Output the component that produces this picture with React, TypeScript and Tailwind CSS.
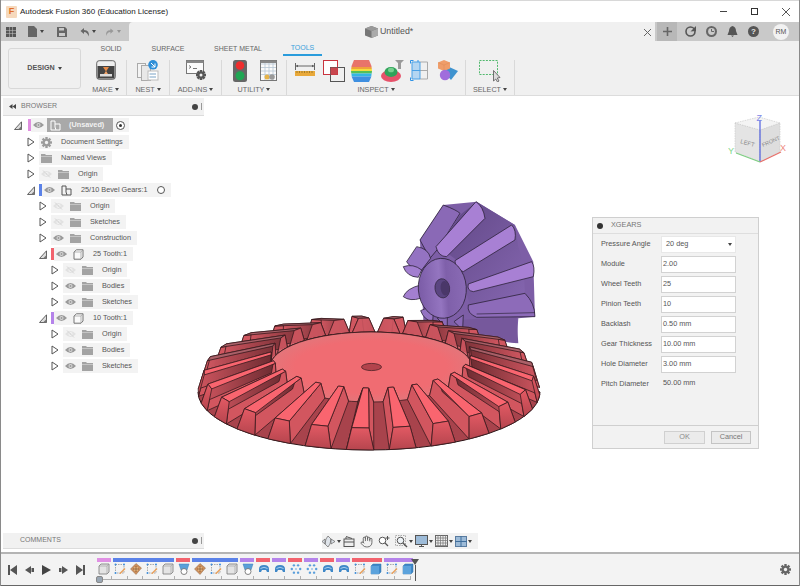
import React from 'react';
import { Hand } from 'lucide-react';

// ---------- small icons ----------
function Caret({ className = '' }: { className?: string }) {
  return <span className={`inline-block w-0 h-0 border-l-[2.5px] border-r-[2.5px] border-t-[3px] border-l-transparent border-r-transparent border-t-[#444] ${className}`} />;
}

function Eye({ off }: { off?: boolean }) {
  const c = off ? '#e2e2e2' : '#9a9a9a';
  return (
    <svg width="11" height="8" viewBox="0 0 11 8" className="shrink-0">
      <path d="M0 4 Q5.5 -2 11 4 Q5.5 10 0 4Z" fill={c} />
      <circle cx="5.5" cy="4" r="2" fill={off ? '#f3f3f3' : '#d8d8d8'} />
      <circle cx="5.5" cy="4" r="1" fill={c} />
      {off && <path d="M2 0.5 L9 7.5" stroke="#d4d4d4" strokeWidth="1" />}
    </svg>
  );
}

function Folder() {
  return (
    <svg width="11" height="9" viewBox="0 0 11 9" className="shrink-0">
      <path d="M0 0 H4 L5 1 H11 V9 H0Z" fill="#a3a3a3" />
      <rect x="0" y="2" width="11" height="1" fill="#c4c4c4" />
    </svg>
  );
}

function GearIcon({ size = 11, color = '#9c9c9c' }: { size?: number; color?: string }) {
  const teeth = [0, 45, 90, 135];
  return (
    <svg width={size} height={size} viewBox="0 0 12 12" className="shrink-0">
      {teeth.map((a) => (
        <rect key={a} x="4.7" y="0" width="2.6" height="12" fill={color} transform={`rotate(${a} 6 6)`} />
      ))}
      <circle cx="6" cy="6" r="4.2" fill={color} />
      <circle cx="6" cy="6" r="1.8" fill="#f3f3f3" />
    </svg>
  );
}

function CompIcon({ light }: { light?: boolean }) {
  const s = light ? '#fff' : '#555';
  return (
    <svg width="11" height="11" viewBox="0 0 11 11" className="shrink-0">
      <path d="M1 1 H5 V4 H10 V10 H1Z" fill="none" stroke={s} strokeWidth="1" />
      <path d="M5 4 V7 M5 7 Q6 10 6 10" fill="none" stroke={s} strokeWidth="1" />
    </svg>
  );
}

function BodyIcon() {
  return (
    <svg width="11" height="11" viewBox="0 0 11 11" className="shrink-0">
      <path d="M1 3 L3.5 0.8 H10 V8 L8 10.2 H1Z" fill="#fafafa" stroke="#666" strokeWidth="0.9" />
      <path d="M1 3 H8 V10 M8 3 L10 0.8" fill="none" stroke="#999" strokeWidth="0.7" />
    </svg>
  );
}

// ---------- browser tree ----------
type Row = { level: number; open?: boolean; bar?: string; eye?: 'on' | 'off'; icon: 'folder' | 'gear' | 'comp' | 'body'; label: string; radio?: boolean };

const rows: Row[] = [
  { level: 1, icon: 'gear', label: 'Document Settings' },
  { level: 1, icon: 'folder', label: 'Named Views' },
  { level: 1, eye: 'off', icon: 'folder', label: 'Origin' },
  { level: 1, open: true, bar: 'bg-[#5b82e8]', eye: 'on', icon: 'comp', label: '25/10 Bevel Gears:1', radio: true },
  { level: 2, eye: 'off', icon: 'folder', label: 'Origin' },
  { level: 2, eye: 'off', icon: 'folder', label: 'Sketches' },
  { level: 2, eye: 'on', icon: 'folder', label: 'Construction' },
  { level: 2, open: true, bar: 'bg-[#f2636e]', eye: 'on', icon: 'body', label: '25 Tooth:1' },
  { level: 3, eye: 'off', icon: 'folder', label: 'Origin' },
  { level: 3, eye: 'on', icon: 'folder', label: 'Bodies' },
  { level: 3, eye: 'on', icon: 'folder', label: 'Sketches' },
  { level: 2, open: true, bar: 'bg-[#b583ea]', eye: 'on', icon: 'body', label: '10 Tooth:1' },
  { level: 3, eye: 'off', icon: 'folder', label: 'Origin' },
  { level: 3, eye: 'on', icon: 'folder', label: 'Bodies' },
  { level: 3, eye: 'on', icon: 'folder', label: 'Sketches' },
];

const levelPad = ['pl-[11px]', 'pl-[24px]', 'pl-[36px]', 'pl-[48px]'];

function Arrow({ open }: { open?: boolean }) {
  if (open) {
    return (
      <svg width="8" height="9" viewBox="0 0 8 9" className="shrink-0">
        <path d="M0.5 8.5 H7.5 V0.8Z" fill="#ddd" stroke="#555" strokeWidth="0.9" />
        <path d="M4 8.5 H7.5 V5Z" fill="#777" />
      </svg>
    );
  }
  return (
    <svg width="8" height="10" viewBox="0 0 8 10" className="shrink-0">
      <path d="M1 1 L7 5 L1 9Z" fill="#fff" stroke="#555" strokeWidth="1" />
    </svg>
  );
}

function TreeRow({ row }: { row: Row }) {
  return (
    <div className={`h-[16px] flex items-center ${levelPad[row.level]}`}>
      <div className="w-[12px] shrink-0 flex items-center">
        <Arrow open={row.open} />
      </div>
      {row.bar && <span className={`w-[3px] h-[12px] shrink-0 ${row.bar}`} />}
      <div className="h-[14px] bg-[#f3f3f3] flex items-center pl-[2px] pr-[6px] text-[7.3px] text-[#555] whitespace-nowrap">
        {row.eye && <Eye off={row.eye === 'off'} />}
        <span className={row.eye ? 'ml-[6px] flex' : 'flex'}>
          {row.icon === 'folder' && <Folder />}
          {row.icon === 'gear' && <GearIcon />}
          {row.icon === 'comp' && <CompIcon />}
          {row.icon === 'body' && <BodyIcon />}
        </span>
        <span className="ml-[9px]">{row.label}</span>
        {row.radio && <span className="ml-[9px] w-[8px] h-[8px] rounded-full border border-[#555] bg-white shrink-0" />}
      </div>
    </div>
  );
}

function Browser() {
  return (
    <div className="w-[203px] shrink-0 flex flex-col pt-[2px] pl-[2px] pb-[3px]">
      <div className="h-[18px] bg-[#f1f1f1] border-b border-[#dcdcdc] flex items-center pl-[6px] pr-[2px] text-[7px] text-[#777]">
        <svg width="7" height="5" viewBox="0 0 7 5" className="mr-[5px]">
          <path d="M3.5 0 V5 L0 2.5Z M7 0 V5 L3.5 2.5Z" fill="#444" />
        </svg>
        BROWSER
        <span className="ml-auto w-[6px] h-[6px] rounded-full bg-[#444] mr-[3px]" />
        <span className="w-[1px] h-[7px] bg-[#999]" />
      </div>
      <div className="mt-[1px]">
        <div className="h-[17px] flex items-center pl-[11px] pb-[1px]">
          <div className="w-[14px] shrink-0"><Arrow open /></div>
          <span className="w-[3px] h-[12px] bg-[#e08fe0] shrink-0" />
          <div className="h-[14px] w-[98px] bg-[#f3f3f3] flex items-center pl-[2px]">
            <Eye />
            <div className="ml-[3px] w-[66px] h-[14px] bg-[#a9a9a9] flex items-center pl-[3px] text-[7.3px] font-bold text-[#f2f2f2]">
              <CompIcon light />
              <span className="ml-[8px]">(Unsaved)</span>
            </div>
            <span className="ml-[3px] w-[9px] h-[9px] rounded-full border border-[#555] bg-white flex items-center justify-center">
              <span className="w-[3px] h-[3px] rounded-full bg-[#333]" />
            </span>
          </div>
        </div>
        {rows.map((r, i) => (
          <TreeRow key={i} row={r} />
        ))}
      </div>
      <div className="mt-auto h-[16px] bg-[#f1f1f1] border-b border-[#dcdcdc] flex items-center pl-[17px] pr-[2px] text-[7px] text-[#777]">
        COMMENTS
        <span className="ml-auto w-[6px] h-[6px] rounded-full bg-[#444] mr-[3px]" />
        <span className="w-[1px] h-[7px] bg-[#999]" />
      </div>
    </div>
  );
}

// ---------- ribbon icons ----------
function MakeIcon() {
  return (
    <svg width="20" height="20" viewBox="0 0 20 20">
      <rect x="0.7" y="0.7" width="18.6" height="18.6" rx="2.5" fill="#eee" stroke="#666" />
      <rect x="1.5" y="6" width="17" height="12.5" fill="#444" />
      <path d="M7 7 H13 L10 11.5Z" fill="#e98a45" />
      <rect x="4" y="14" width="12" height="2.5" fill="#ddd" />
      <path d="M8 14 L10 11 L12 14Z" fill="#f2a56b" />
    </svg>
  );
}
function NestIcon() {
  return (
    <svg width="22" height="21" viewBox="0 0 22 21">
      <rect x="0.5" y="3.5" width="8" height="14" fill="#f4f4f4" stroke="#aaa" />
      <rect x="4.5" y="5.5" width="9" height="15" fill="#e8e8e8" stroke="#aaa" />
      <rect x="11" y="11" width="10" height="9" fill="#fff" stroke="#bbb" />
      <path d="M12.5 14 H19 M12.5 17 H19" stroke="#7ba3c6" />
      <circle cx="16" cy="4.8" r="4.8" fill="#2f8fd8" />
      <path d="M14 3 L18 7 M18 3.5 V7 H14.5" stroke="#fff" strokeWidth="1" fill="none" />
    </svg>
  );
}
function GearSvg() {
  return (
    <g>
      {[0, 45, 90, 135].map((a) => (
        <rect key={a} x="3.7" y="0" width="2.6" height="10" fill="#555" transform={`rotate(${a} 5 5)`} />
      ))}
      <circle cx="5" cy="5" r="3.4" fill="#555" />
      <circle cx="5" cy="5" r="1.5" fill="#f0f0f0" />
    </g>
  );
}
function AddInsIcon() {
  return (
    <svg width="20" height="21" viewBox="0 0 20 21">
      <rect x="0.5" y="0.5" width="17" height="13" fill="#fbfbfb" stroke="#777" />
      <rect x="0.5" y="0.5" width="17" height="2.5" fill="#888" />
      <path d="M3 5.5 L5 7 L3 8.5 M7 8.5 H11" stroke="#555" fill="none" strokeWidth="0.8" />
      <g transform="translate(10 10)"><GearSvg /></g>
    </svg>
  );
}
function LightIcon() {
  return (
    <svg width="14" height="22" viewBox="0 0 14 22">
      <rect x="0" y="0" width="14" height="22" rx="2.5" fill="#666" />
      <circle cx="7" cy="5.5" r="4.3" fill="#ee2d2d" />
      <circle cx="7" cy="15.8" r="4.5" fill="#1fa653" />
    </svg>
  );
}
function TableIcon() {
  const ys = [4, 7.5, 11, 14.5];
  return (
    <svg width="17" height="21" viewBox="0 0 17 21">
      <rect x="0.5" y="0.5" width="16" height="20" fill="#fafafa" stroke="#777" />
      <rect x="0.5" y="0.5" width="16" height="2.5" fill="#888" />
      {ys.map((y) => <path key={y} d={`M1 ${y} H16`} stroke="#b6c6d4" strokeWidth="0.8" />)}
      <path d="M5 3 V20 M9 3 V20 M13 3 V20" stroke="#b6c6d4" strokeWidth="0.8" />
      <circle cx="7" cy="17" r="2.5" fill="#e5b349" />
      <circle cx="12" cy="17" r="2.8" fill="#9a9a9a" />
    </svg>
  );
}
function RulerIcon() {
  return (
    <svg width="20" height="20" viewBox="0 0 20 20">
      <path d="M0.5 3 V10 M19.5 3 V10 M1 6 H19" stroke="#555" strokeWidth="0.9" fill="none" />
      <path d="M1 6 L3 4.8 V7.2Z M19 6 L17 4.8 V7.2Z" fill="#555" />
      <rect x="0" y="11" width="20" height="5" fill="#e9a93a" />
      <path d="M2 11 V13 M4.5 11 V13 M7 11 V13 M9.5 11 V13 M12 11 V13 M14.5 11 V13 M17 11 V13" stroke="#8a6a20" strokeWidth="0.7" />
    </svg>
  );
}
function InterfereIcon() {
  return (
    <svg width="22" height="22" viewBox="0 0 22 22">
      <rect x="0.5" y="0.5" width="14" height="14" fill="#fff" stroke="#c9343f" />
      <rect x="7.5" y="7.5" width="14" height="14" fill="none" stroke="#555" />
      <rect x="7.5" y="7.5" width="7" height="7" fill="#c9474f" />
    </svg>
  );
}
function ZebraIcon() {
  return (
    <svg width="21" height="22" viewBox="0 0 21 22">
      <defs>
        <clipPath id="brl"><path d="M3 0 H18 Q24 11 18 22 H3 Q-3 11 3 0Z" /></clipPath>
      </defs>
      <g clipPath="url(#brl)">
        <rect width="21" height="7" fill="#e8736a" />
        <rect y="7" width="21" height="2" fill="#f0a23a" />
        <rect y="9" width="21" height="2" fill="#f4dd3d" />
        <rect y="11" width="21" height="2.5" fill="#52c05a" />
        <rect y="13.5" width="21" height="3" fill="#33b6e4" />
        <rect y="16.5" width="21" height="5.5" fill="#3f8fe0" />
      </g>
    </svg>
  );
}
function CurvIcon() {
  return (
    <svg width="24" height="22" viewBox="0 0 24 22">
      <path d="M14 0 H23 L20 3 V9 H17 V3Z" fill="#9a9a9a" />
      <ellipse cx="10" cy="16" rx="10" ry="6" fill="#e6526a" />
      <ellipse cx="10" cy="12" rx="6.5" ry="5" fill="#2fa35a" />
      <ellipse cx="10" cy="10" rx="3" ry="2.3" fill="#78d08f" />
    </svg>
  );
}
function SectionIcon() {
  return (
    <svg width="18" height="21" viewBox="0 0 18 21">
      <path d="M10 2 H17.5 V19 H10" fill="none" stroke="#aaa" />
      <path d="M10 10.5 H17.5" stroke="#aaa" />
      <rect x="2" y="2" width="8" height="17" fill="#b4d6f2" />
      <path d="M2 2 H10 V19 H2Z M2 10.5 H10" fill="none" stroke="#4aa1e6" strokeWidth="1" />
      <path d="M0.5 3.5 V0.5 H3.5 M0.5 17.5 V20.5 H3.5 M8 0 V2" stroke="#2f93e6" fill="none" />
    </svg>
  );
}
function AppearanceIcon() {
  return (
    <svg width="21" height="21" viewBox="0 0 21 21">
      <path d="M9 6 L20 11 L13 20 L6 12Z" fill="#3f93cf" />
      <path d="M6 0 L12 2.5 V8.5 L6 11 L0 8.5 V2.5Z" fill="#ef9d6a" />
      <path d="M6 5 L12 2.5 M6 5 L0 2.5 M6 5 V11" stroke="#d98552" strokeWidth="0.4" />
      <circle cx="7" cy="15" r="5.2" fill="#a06ddc" />
    </svg>
  );
}
function SelectIcon() {
  return (
    <svg width="22" height="22" viewBox="0 0 22 22">
      <rect x="0.5" y="0.5" width="18" height="14" fill="none" stroke="#52b96e" strokeDasharray="2 1.2" />
      <path d="M14.5 10.5 V21 L16.8 19 L18.5 22 L20 21 L18.3 18 L21 17.5Z" fill="#ddd" stroke="#555" strokeWidth="0.8" />
    </svg>
  );
}

function Group({ label, w, children }: { label: string; w: string; children: React.ReactNode }) {
  return (
    <div className={`${w} h-[35px] shrink-0 border-r border-[#d9d9d9] flex flex-col items-center`}>
      <div className="h-[24px] flex items-start">{children}</div>
      <div className="mt-[1px] text-[7.2px] leading-[9px] text-[#666] flex items-center gap-[2px]">
        {label}
        <Caret />
      </div>
    </div>
  );
}

// ---------- gear drawing ----------
type Ring = { cx: number; cy: number; rx: number; ry: number };
const outerBase: Ring = { cx: 369, cy: 392, rx: 171, ry: 58 };
const outerCrest: Ring = { cx: 369, cy: 372, rx: 165, ry: 56 };
const innerRoot: Ring = { cx: 371, cy: 367, rx: 101, ry: 35 };
const innerCrest: Ring = { cx: 371, cy: 353, rx: 100, ry: 35 };

function pt(r: Ring, a: number) {
  const t = (a * Math.PI) / 180;
  return `${(r.cx + r.rx * Math.cos(t)).toFixed(1)} ${(r.cy + r.ry * Math.sin(t)).toFixed(1)}`;
}
function poly(...p: string[]) {
  return 'M' + p.join(' L') + 'Z';
}
function lerp(p: number, q: number, t: number) {
  return p + (q - p) * t;
}

const toothAngles = Array.from({ length: 25 }, (_, i) => 93 + i * 14.4);

function Tooth({ a }: { a: number }) {
  const s = Math.sin((a * Math.PI) / 180);
  const c = Math.cos((a * Math.PI) / 180);
  const back = s < -0.1;
  // teeth look wider at the end nearest the camera
  const t = (s + 1) / 2;
  const ib = lerp(6.5, 4.5, t);
  const ik = lerp(3, 1.6, t);
  const ob = lerp(2.6, 4.6, t);
  const ok = lerp(1.7, 3, t);
  const outer = poly(pt(outerBase, a - ob), pt(outerBase, a + ob), pt(outerCrest, a + ok), pt(outerCrest, a - ok));
  const inner = poly(pt(innerRoot, a - ib), pt(innerRoot, a + ib), pt(innerCrest, a + ik), pt(innerCrest, a - ik));
  const crest = poly(pt(innerCrest, a - ik), pt(innerCrest, a + ik), pt(outerCrest, a + ok), pt(outerCrest, a - ok));
  const flankA = poly(pt(innerRoot, a - ib), pt(innerCrest, a - ik), pt(outerCrest, a - ok), pt(outerBase, a - ob));
  const flankB = poly(pt(innerRoot, a + ib), pt(innerCrest, a + ik), pt(outerCrest, a + ok), pt(outerBase, a + ob));
  const st = { stroke: '#3a1a1e', strokeWidth: 0.8, strokeLinejoin: 'round' as const };
  const flanks = c > 0
    ? [<path key="a" d={flankB} fill="#d2565f" {...st} />, <path key="b" d={flankA} fill="url(#flk)" {...st} />]
    : [<path key="a" d={flankA} fill="#d2565f" {...st} />, <path key="b" d={flankB} fill="url(#flk2)" {...st} />];
  if (back) {
    return (
      <g fillOpacity={0.9}>
        <path d={outer} fill="#c24f58" {...st} />
        {flanks}
        <path d={crest} fill="#a8636a" {...st} />
        <path d={inner} fill="#cf5660" {...st} />
      </g>
    );
  }
  return (
    <g>
      <path d={inner} fill="#c24f58" {...st} />
      {flanks}
      <path d={crest} fill="#f9656f" {...st} />
      <path d={outer} fill="url(#fac)" {...st} />
    </g>
  );
}

function PinionGear() {
  const st = { stroke: '#2c2238', strokeWidth: 2.4, strokeLinejoin: 'round' as const };
  return (
    <g transform="translate(190 190) scale(0.3333)">
      <path d="M690 150 L760 45 L860 35 L975 105 L1030 215 L1035 380 L985 385 L980 460 L820 440 L700 390 Z" fill="#7d5ea6" />
      <path d="M690 150 L760 45 Q800 60 810 70 L745 175 L720 205Z" fill="#8a69b6" {...st} />
      <path d="M810 75 L860 35 L975 105 L985 170 L1000 215 L1005 310 L840 345 L800 210 L745 170Z" fill="url(#pbk)" />
      <path d="M980 380 L985 460 L820 440 L810 390Z" fill="#76589c" />
      <path d="M738 170 L858 35 Q880 50 885 85 L770 200 Q745 200 738 170Z" fill="#a880d4" {...st} />
      <path d="M795 212 L965 105 Q980 120 975 150 L820 245 Q795 238 795 212Z" fill="#a880d4" {...st} />
      <path d="M835 282 L1025 215 Q1036 230 1030 260 L850 305 Q830 302 835 282Z" fill="#a880d4" {...st} />
      <path d="M835 345 L1005 310 Q1035 340 1035 380 L860 382 Q830 370 835 345Z" fill="#8d6bb9" {...st} />
      <path d="M860 372 L1035 368" stroke="#2c2238" strokeWidth="2" />
      <path d="M650 215 L680 170 Q715 175 722 205 L695 240 Q660 235 650 215Z" fill="#9473c2" {...st} />
      <path d="M640 230 Q670 220 695 240 L685 262 Q650 260 640 230Z" fill="#a37fd0" {...st} />
      <path d="M640 320 Q650 295 692 285 L692 325 Q660 335 640 320Z" fill="#a37fd0" {...st} />
      <path d="M692 362 L732 345 L728 395 Q702 390 692 362Z" fill="#9473c2" {...st} />
      <path d="M742 385 L772 372 L772 415 Z" fill="#8a69b6" {...st} />
      <path d="M792 395 L820 375 L818 420 Z" fill="#8a69b6" {...st} />
      <ellipse cx="757" cy="295" rx="72" ry="90" transform="rotate(-4 757 295)" fill="url(#dsc)" stroke="#2c2238" strokeWidth="2.4" />
      <ellipse cx="757" cy="295" rx="22" ry="29" transform="rotate(-8 757 295)" fill="#5a4580" stroke="#2c2238" strokeWidth="2" />
      <ellipse cx="765" cy="295" rx="13" ry="22" transform="rotate(-8 765 295)" fill="#4a3769" />
    </g>
  );
}

function GearScene() {
  const sinOf = (a: number) => Math.sin((a * Math.PI) / 180);
  const back = toothAngles.filter((a) => sinOf(a) < -0.05).sort((p, q) => sinOf(p) - sinOf(q));
  const front = toothAngles.filter((a) => sinOf(a) >= -0.05).sort((p, q) => sinOf(p) - sinOf(q));
  const cone = `M${pt(outerBase, 180)} A171 58 0 0 0 ${pt(outerBase, 0)} L${pt(innerRoot, 0)} A101 35 0 0 0 ${pt(innerRoot, 180)}Z`;
  return (
    <svg width="800" height="490" viewBox="0 96 800 490" className="absolute left-[-1px] top-0 pointer-events-none">
      <defs>
        <linearGradient id="flk" x1="0" x2="1" y1="0" y2="0">
          <stop offset="0" stopColor="#6e2c32" />
          <stop offset="1" stopColor="#cf555f" />
        </linearGradient>
        <linearGradient id="flk2" x1="0" x2="1" y1="0" y2="0">
          <stop offset="0" stopColor="#cf555f" />
          <stop offset="1" stopColor="#6e2c32" />
        </linearGradient>
        <linearGradient id="fac" x1="0" x2="0" y1="0" y2="1">
          <stop offset="0" stopColor="#e35a64" />
          <stop offset="1" stopColor="#b6454e" />
        </linearGradient>
        <linearGradient id="pbk" x1="0" x2="1" y1="0" y2="1">
          <stop offset="0" stopColor="#5f4684" />
          <stop offset="1" stopColor="#8566b0" />
        </linearGradient>
        <linearGradient id="dsc" x1="0" x2="1" y1="0" y2="0">
          <stop offset="0" stopColor="#7a5ba6" />
          <stop offset="0.45" stopColor="#9475c0" />
          <stop offset="0.6" stopColor="#7f60aa" />
          <stop offset="1" stopColor="#8a6bb5" />
        </linearGradient>
        <radialGradient id="plt">
          <stop offset="0.75" stopColor="#f06c72" />
          <stop offset="1" stopColor="#e4757a" />
        </radialGradient>
      </defs>
      <PinionGear />
      {back.map((a) => <Tooth key={a} a={a} />)}
      <path d={cone} fill="#a8434c" stroke="#2a1416" strokeWidth="1" />
      <ellipse cx={innerRoot.cx} cy={innerRoot.cy} rx={innerRoot.rx} ry={innerRoot.ry} fill="url(#plt)" stroke="#3a1a1e" strokeWidth="0.8" />
      <ellipse cx="371.5" cy="367" rx="10" ry="3.6" fill="#b2434c" stroke="#3a1a1e" strokeWidth="0.7" />
      {front.map((a) => <Tooth key={a} a={a} />)}
    </svg>
  );
}

function ViewCube() {
  return (
    <svg width="66" height="60" viewBox="0 0 66 60" className="absolute left-[727px] top-[12px]">
      <path d="M7 15 L31 9 L52 15 L52 44 L32 54 L7 44Z" fill="#f0f0f0" />
      <path d="M7 15 L32 22 L32 54 L7 44Z" fill="#e4e4e4" stroke="#c6c6c6" strokeWidth="0.6" strokeDasharray="1.5 1" />
      <path d="M52 15 L32 22 L32 54 L52 44Z" fill="#dedede" stroke="#c6c6c6" strokeWidth="0.6" strokeDasharray="1.5 1" />
      <path d="M7 15 L31 9 L52 15 L32 22Z" fill="#f4f4f4" stroke="#c6c6c6" strokeWidth="0.6" strokeDasharray="1.5 1" />
      <text x="12" y="35" fontSize="6" fill="#888" transform="rotate(16 12 35)">LEFT</text>
      <text x="35" y="39" fontSize="5.5" fill="#888" transform="rotate(-24 35 39)">FRONT</text>
      <path d="M32 12 V54" stroke="#4f5fe0" strokeWidth="1.2" />
      <path d="M32 54 L8 45" stroke="#7ed082" strokeWidth="1.2" />
      <path d="M32 54 L53 44" stroke="#e8706a" strokeWidth="1.2" />
      <text x="28.5" y="13" fontSize="9" fill="#7d87e8">Z</text>
      <text x="0" y="46" fontSize="9" fill="#7fd88a">Y</text>
      <text x="52" y="43" fontSize="9" fill="#ee8a80">X</text>
    </svg>
  );
}

// ---------- dialog ----------
const fields: [string, string][] = [
  ['Module', '2.00'],
  ['Wheel Teeth', '25'],
  ['Pinion Teeth', '10'],
  ['Backlash', '0.50 mm'],
  ['Gear Thickness', '10.00 mm'],
  ['Hole Diameter', '3.00 mm'],
];

function GearsDialog() {
  return (
    <div className="absolute left-[591px] top-[121px] w-[167px] h-[232px] bg-[#f2f2f2] border border-[#cfcfcf] flex flex-col text-[7.3px] text-[#555]">
      <div className="h-[16px] border-b border-[#dedede] flex items-center pl-[4px] text-[#777]">
        <span className="w-[6px] h-[6px] rounded-full bg-[#333] mr-[8px]" />
        XGEARS
      </div>
      <div className="flex-1 pl-[8px]">
        <div className="h-[20px] flex items-center">
          <span className="w-[60px] shrink-0">Pressure Angle</span>
          <div className="w-[75px] h-[17px] bg-white border border-[#e8e8e8] flex items-center pl-[4px] pr-[3px]">
            20 deg
            <Caret className="ml-auto" />
          </div>
        </div>
        {fields.map(([k, v]) => (
          <div key={k} className="h-[20px] flex items-center">
            <span className="w-[60px] shrink-0">{k}</span>
            <div className="w-[75px] h-[17px] bg-white border border-[#d2d2d2] flex items-center pl-[1px]">{v}</div>
          </div>
        ))}
        <div className="h-[20px] flex items-center">
          <span className="w-[62px] shrink-0">Pitch Diameter</span>
          <span className="-mt-[1px]">50.00 mm</span>
        </div>
      </div>
      <div className="h-[23px] border-t border-[#cfcfcf] flex items-center justify-end pr-[7px] gap-[6px] text-[#777]">
        <div className="w-[41px] h-[13px] bg-[#ebebeb] border border-[#d0d0d0] flex items-center justify-center text-[#8a8a8a]">OK</div>
        <div className="w-[40px] h-[13px] bg-[#ebebeb] border border-[#c4c4c4] flex items-center justify-center">Cancel</div>
      </div>
    </div>
  );
}

// ---------- nav bar ----------
function NavBar() {
  return (
    <div className="absolute left-[321px] bottom-[3px] h-[16px] w-[156px] bg-[#f2f2f2] flex items-center text-[#555]">
      <svg width="13" height="11" viewBox="0 0 13 11"><path d="M6 0 L9 3 L8 8 L6 11 L3 8 L4 3Z M0 5.5 L3 3 V8Z M13 5.5 L9 3 V8Z" fill="#dfe4ea" stroke="#666" strokeWidth="0.7" /></svg>
      <Caret className="ml-[2px]" />
      <svg width="12" height="11" viewBox="0 0 12 11" className="ml-[2px]"><rect x="1" y="3" width="10" height="7.5" fill="#eee" stroke="#555" /><path d="M1 6 H11" stroke="#555" /><path d="M3 0.5 L9 2.5 M3 3 L3 1" stroke="#555" /></svg>
      <Hand size={13} strokeWidth={1.4} className="ml-[5px] text-[#444]" />
      <svg width="12" height="12" viewBox="0 0 12 12" className="ml-[5px]"><circle cx="4.5" cy="5.5" r="3.3" fill="#fff" stroke="#555" /><path d="M7 8 L10 11" stroke="#555" strokeWidth="1.3" /><path d="M9.5 1 V5 M7.5 3 H11.5" stroke="#555" /></svg>
      <svg width="13" height="13" viewBox="0 0 13 13" className="ml-[5px]"><rect x="0.5" y="0.5" width="10" height="10" fill="none" stroke="#aaa" strokeDasharray="1.5 1" /><circle cx="5.5" cy="5.5" r="3.3" fill="#eef3f7" stroke="#555" /><path d="M8 8 L12 12" stroke="#555" strokeWidth="1.4" /></svg>
      <Caret className="ml-[1px]" />
      <svg width="13" height="12" viewBox="0 0 13 12" className="ml-[2px]"><rect x="0.5" y="0.5" width="12" height="9" fill="#9dbbd8" stroke="#555" /><path d="M4 11.5 H9 M6.5 9.5 V11.5" stroke="#555" /></svg>
      <Caret className="ml-[1px]" />
      <svg width="13" height="12" viewBox="0 0 13 12" className="ml-[2px]"><rect x="0.5" y="0.5" width="12" height="11" fill="#eee" stroke="#666" /><path d="M3 0 V12 M5.5 0 V12 M8 0 V12 M10.5 0 V12 M0 3 H13 M0 5.5 H13 M0 8 H13 M0 10.5 H13" stroke="#777" strokeWidth="0.7" /></svg>
      <Caret className="ml-[1px]" />
      <svg width="12" height="11" viewBox="0 0 12 11" className="ml-[2px]"><rect x="0.5" y="0.5" width="11" height="10" fill="#9dbbd8" stroke="#5a7ca0" /><path d="M6 0 V11 M0 5.5 H12" stroke="#3f6e9c" /></svg>
      <Caret className="ml-[1px]" />
    </div>
  );
}

// ---------- timeline ----------
const segs: [string, string][] = [
  ['w-[14px]', 'bg-[#e090e4]'], ['w-[61px]', 'bg-[#5b82e8]'], ['w-[14px]', 'bg-[#f2636e]'], ['w-[46px]', 'bg-[#5b82e8]'],
  ['w-[14px]', 'bg-[#b583ea]'], ['w-[14px]', 'bg-[#f2636e]'], ['w-[14px]', 'bg-[#b583ea]'], ['w-[14px]', 'bg-[#f2636e]'],
  ['w-[14px]', 'bg-[#b583ea]'], ['w-[14px]', 'bg-[#f2636e]'], ['w-[14px]', 'bg-[#b583ea]'], ['w-[30px]', 'bg-[#f2636e]'], ['w-[29px]', 'bg-[#b583ea]'],
];

type Kind = 'box' | 'sketch' | 'ext' | 'loft' | 'curve' | 'dots' | 'blue';
const items: Kind[] = ['box', 'sketch', 'ext', 'sketch', 'box', 'loft', 'ext', 'sketch', 'box', 'loft', 'curve', 'curve', 'dots', 'dots', 'curve', 'curve', 'sketch', 'blue', 'sketch', 'blue'];

function TlIcon({ kind }: { kind: Kind }) {
  return (
    <svg width="12" height="12" viewBox="0 0 12 12">
      {kind === 'box' && (
        <>
          <path d="M1 3 L3 1 H11 V9 L9 11 H1Z" fill="#e4e4e4" stroke="#777" strokeWidth="0.8" />
          <path d="M1 3 H9 V11 M9 3 L11 1" fill="none" stroke="#999" strokeWidth="0.6" />
        </>
      )}
      {kind === 'sketch' && (
        <>
          <rect x="1.5" y="1.5" width="8.5" height="8.5" fill="none" stroke="#777" strokeWidth="0.6" strokeDasharray="1.5 1" />
          <circle cx="1.5" cy="1.5" r="1" fill="#3f8fdc" />
          <circle cx="10" cy="1.5" r="1" fill="#3f8fdc" />
          <circle cx="1.5" cy="10" r="1" fill="#3f8fdc" />
          <path d="M5 10.5 L10.5 5 L11.5 6 L6.5 11Z" fill="#e9a05a" />
        </>
      )}
      {kind === 'ext' && (
        <>
          <path d="M6 0.5 L11.5 5 L6 11.5 L0.5 6Z" fill="#cd8f5a" stroke="#8f6a4a" strokeWidth="0.5" />
          <path d="M4 4 L8 4 L8 8 L4 8Z" fill="#e0b07a" />
          <path d="M6 3 V9 M3 6 H9" stroke="#7a5030" strokeWidth="0.6" />
        </>
      )}
      {kind === 'loft' && (
        <>
          <path d="M1 1 H11 L9 7 H3Z" fill="#5b9fd8" stroke="#3f7fb8" strokeWidth="0.5" />
          <circle cx="6" cy="8.5" r="3" fill="#fff" stroke="#666" strokeWidth="0.8" />
        </>
      )}
      {kind === 'curve' && (
        <>
          <path d="M1 6 Q1 2 6 2 Q11 2 11 6 V9 H9 L8 7 H4 L3 9 H1Z" fill="#3f88c8" />
          <path d="M2.5 5.5 Q6 3 9.5 5.5" stroke="#a8d0f0" strokeWidth="1" fill="none" />
        </>
      )}
      {kind === 'dots' && (
        <>
          {[0, 60, 120, 180, 240, 300].map((a) => (
            <circle key={a} cx={6 + 4.2 * Math.cos((a * Math.PI) / 180)} cy={6 + 4.2 * Math.sin((a * Math.PI) / 180)} r="1.2" fill="#5a9fdc" />
          ))}
          <circle cx="6" cy="6" r="0.8" fill="#5a9fdc" />
        </>
      )}
      {kind === 'blue' && (
        <>
          <path d="M1 3 L3 1 H11 V9 L9 11 H1Z" fill="#3f88c8" stroke="#2f70a8" strokeWidth="0.5" />
          <path d="M9 3 H1 V11 H9Z" fill="#5ba2dc" />
        </>
      )}
    </svg>
  );
}

function Timeline() {
  return (
    <div className="h-[34px] bg-[#f3f3f3] border-t-2 border-[#b4b4b4] border-b border-b-[#666] flex shrink-0 relative">
      <div className="w-[96px] shrink-0 flex items-center pl-[7px] gap-[8px]">
        <svg width="9" height="10" viewBox="0 0 9 10"><path d="M0 0 H2 V10 H0Z M9 0 V10 L2 5Z" fill="#555" /></svg>
        <svg width="9" height="10" viewBox="0 0 9 10"><path d="M6 1 V9 L0 5Z M6.5 3 H9 V7 H6.5Z" fill="#555" /></svg>
        <svg width="9" height="10" viewBox="0 0 9 10"><path d="M0 0 L9 5 L0 10Z" fill="#444" /></svg>
        <svg width="9" height="10" viewBox="0 0 9 10"><path d="M3 1 V9 L9 5Z M0 3 H2.5 V7 H0Z" fill="#555" /></svg>
        <svg width="9" height="10" viewBox="0 0 9 10"><path d="M9 0 H7 V10 H9Z M0 0 V10 L7 5Z" fill="#555" /></svg>
      </div>
      <div className="flex flex-col pt-[4px]">
        <div className="flex gap-[2px] h-[4px]">
          {segs.map(([w, c], i) => <span key={i} className={`${w} ${c}`} />)}
        </div>
        <div className="flex mt-[1px] -ml-[1px]">
          {items.map((k, i) => (
            <div key={i} className="w-[16px] flex justify-center"><TlIcon kind={k} /></div>
          ))}
        </div>
        <div className="relative mt-[4px] ml-[4px] w-[310px] h-[1px] bg-[#b0b0b0] flex justify-between pl-[10px]">
          {items.map((_, i) => <span key={i} className="w-[1px] h-[3px] -mt-[3px] bg-[#b0b0b0]" />)}
          <span className="absolute -left-[5px] -top-[3px] w-[7px] h-[7px] rounded-[2px] bg-[#9aa7b4] border border-[#888]" />
        </div>
      </div>
      <div className="absolute left-[410px] top-[5px] flex flex-col items-center">
        <span className="w-0 h-0 border-l-[4px] border-r-[4px] border-t-[6px] border-l-transparent border-r-transparent border-t-[#555]" />
        <span className="w-[1px] h-[16px] bg-[#555]" />
      </div>
      <div className="ml-auto pr-[8px] flex items-center">
        <GearIcon size={11} color="#666" />
      </div>
    </div>
  );
}

// ---------- main ----------
export default function App() {
  return (
    <div className="w-[800px] h-[586px] bg-white flex flex-col overflow-hidden border-l border-r border-[#8a8a8a] opacity-[0.999] font-['Liberation_Sans',sans-serif]">
      {/* Title bar */}
      <div className="h-[22px] shrink-0 flex items-center bg-white border-t border-[#d8d8d8] pl-[5px] pr-[9px]">
        <span className="w-[11px] h-[12px] bg-[#f6d9bd] flex items-center justify-center text-[9px] font-bold text-[#e0702a] rounded-[1px]">F</span>
        <span className="ml-[3px] text-[8px] text-[#222]">Autodesk Fusion 360 (Education License)</span>
        <div className="ml-auto flex items-center gap-[24px]">
          <span className="w-[7px] h-[1px] bg-[#444]" />
          <span className="w-[7px] h-[7px] border border-[#333]" />
          <svg width="8" height="8" viewBox="0 0 8 8"><path d="M0 0 L8 8 M8 0 L0 8" stroke="#444" strokeWidth="0.9" /></svg>
        </div>
      </div>

      {/* Document tab bar */}
      <div className="h-[19px] shrink-0 bg-[#c9c9c9] flex items-stretch">
        <div className="w-[128px] flex items-center pl-[5px]">
          <svg width="10" height="10" viewBox="0 0 10 10"><path d="M0 0 H3 V3 H0Z M3.5 0 H6.5 V3 H3.5Z M7 0 H10 V3 H7Z M0 3.5 H3 V6.5 H0Z M3.5 3.5 H6.5 V6.5 H3.5Z M7 3.5 H10 V6.5 H7Z M0 7 H3 V10 H0Z M3.5 7 H6.5 V10 H3.5Z M7 7 H10 V10 H7Z" fill="#555" /></svg>
          <svg width="9" height="11" viewBox="0 0 9 11" className="ml-[12px]"><path d="M0 0 H6 L9 3 V11 H0Z" fill="#666" /></svg>
          <Caret className="ml-[3px]" />
          <svg width="10" height="10" viewBox="0 0 10 10" className="ml-[13px]"><path d="M0 0 H8 L10 2 V10 H0Z" fill="#666" /><rect x="2" y="1" width="5" height="2.5" fill="#c9c9c9" /><rect x="2" y="6" width="6" height="3" fill="#c9c9c9" /></svg>
          <svg width="10" height="10" viewBox="0 0 10 10" className="ml-[13px]"><path d="M4 1 L0.5 4 L4 7 V5 Q7.5 5 8.5 9.5 Q10 3 4 3Z" fill="#666" /></svg>
          <Caret className="ml-[2px] mr-[9px]" />
          <svg width="9" height="10" viewBox="0 0 10 10"><path d="M6 1 L9.5 4 L6 7 V5 Q2.5 5 1.5 9.5 Q0 3 6 3Z" fill="#999" /></svg>
          <Caret className="ml-[3px] opacity-40" />
        </div>
        <div className="w-[526px] bg-[#f0f0f0] rounded-tl-[4px] flex items-center relative">
          <div className="flex items-center gap-[2px] text-[8.8px] text-[#555] pl-[236px]">
            <svg width="13" height="12" viewBox="0 0 13 12"><path d="M6.5 0 L13 2.5 V9.5 L6.5 12 L0 9.5 V2.5Z" fill="#777" /><path d="M6.5 5 L13 2.5 V9.5 L6.5 12Z" fill="#aaa" /><path d="M6.5 5 L0 2.5 L6.5 0 L13 2.5Z" fill="#999" /></svg>
            Untitled*
          </div>
          <svg width="7" height="7" viewBox="0 0 7 7" className="absolute right-[4px] top-[7px]"><path d="M0 0 L7 7 M7 0 L0 7" stroke="#666" strokeWidth="1" /></svg>
        </div>
        <div className="w-[20px] ml-[2px] bg-[#b8b8b8] flex items-center justify-center">
          <svg width="9" height="9" viewBox="0 0 9 9"><path d="M4.5 0 V9 M0 4.5 H9" stroke="#666" strokeWidth="1.6" /></svg>
        </div>
        <div className="flex-1 flex items-center pl-[8px] gap-[10px]">
          <svg width="11" height="11" viewBox="0 0 11 11"><circle cx="5.5" cy="5.5" r="4.5" fill="none" stroke="#555" strokeWidth="1.6" /><path d="M5.5 5.5 L11 0 V5Z" fill="#555" /></svg>
          <svg width="11" height="11" viewBox="0 0 11 11"><circle cx="5.5" cy="5.5" r="5.5" fill="#666" /><circle cx="5.5" cy="5.5" r="3.4" fill="#c9c9c9" /><path d="M5.5 3 V5.5 H8" stroke="#666" fill="none" /></svg>
          <svg width="11" height="11" viewBox="0 0 11 11"><path d="M5.5 0 Q9 1 9 5 L10.5 9 H0.5 L2 5 Q2 1 5.5 0Z M4 9.5 H7 L5.5 11Z" fill="#555" /></svg>
          <span className="w-[11px] h-[11px] rounded-full bg-[#555] text-[#e8e8e8] text-[8px] font-bold leading-[11px] text-center">?</span>
          <span className="ml-[4px] w-[16px] h-[16px] rounded-full bg-[#f2f2f2] text-[#555] text-[7px] leading-[16px] text-center">RM</span>
        </div>
      </div>

      {/* Ribbon */}
      <div className="h-[55px] shrink-0 bg-[#f0f0f0] border-b border-[#dcdcdc] flex">
        <div className="w-[84px] shrink-0 pl-[7px] pt-[7px]">
          <div className="w-[73px] h-[41px] border border-[#d8d8d8] rounded-[3px] flex items-center justify-center gap-[3px] text-[7.2px] font-bold text-[#555]">
            DESIGN
            <Caret />
          </div>
        </div>
        <div className="flex flex-col">
          <div className="h-[16px] flex text-[7px] text-[#666] shrink-0">
            <div className="w-[52px] h-[15px] pt-[1px] flex items-center justify-center">SOLID</div>
            <div className="w-[62px] h-[15px] pt-[1px] flex items-center justify-center">SURFACE</div>
            <div className="w-[78px] h-[15px] pt-[1px] flex items-center justify-center">SHEET METAL</div>
            <div className="ml-[6px] w-[39px] h-[15px] pt-[1px] flex items-center justify-center text-[#3a9fdc] border-b-2 border-[#2a9cdc]">TOOLS</div>
          </div>
          <div className="flex mt-[3px]">
            <Group label="MAKE" w="w-[42px]"><MakeIcon /></Group>
            <Group label="NEST" w="w-[43px]"><NestIcon /></Group>
            <Group label="ADD-INS" w="w-[52px]"><AddInsIcon /></Group>
            <Group label="UTILITY" w="w-[65px]"><div className="flex gap-[13px] items-start pl-[1px]"><LightIcon /><TableIcon /></div></Group>
            <Group label="INSPECT" w="w-[179px]">
              <div className="flex items-start pl-[1px]">
                <RulerIcon />
                <span className="flex ml-[8px]"><InterfereIcon /></span>
                <span className="flex ml-[6px]"><ZebraIcon /></span>
                <span className="flex ml-[9px]"><CurvIcon /></span>
                <span className="flex ml-[5px]"><SectionIcon /></span>
                <span className="flex ml-[10px]"><AppearanceIcon /></span>
              </div>
            </Group>
            <Group label="SELECT" w="w-[49px]"><SelectIcon /></Group>
          </div>
        </div>
      </div>

      {/* Canvas */}
      <div className="flex-1 min-h-0 relative flex">
        <Browser />
        <GearScene />
        <ViewCube />
        <GearsDialog />
        <NavBar />
      </div>

      <Timeline />
    </div>
  );
}
